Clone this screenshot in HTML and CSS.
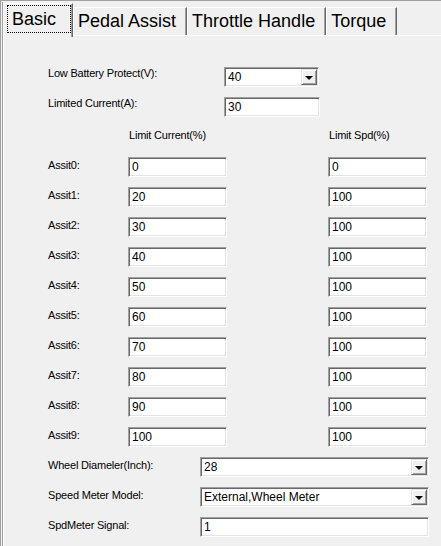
FILE: index.html
```html
<!DOCTYPE html>
<html lang="en">
<head>
    <meta charset="UTF-8">
    <meta name="viewport" content="width=device-width, initial-scale=1.0">
    <title>Basic</title>
    <link rel="stylesheet" href="styles.css">
</head>
<body>
    <div class="window">
        <div class="tabctl">
            <div class="tabs">
                <div class="tab tab-active"><span class="tab-focus">Basic</span></div>
                <div class="tab">Pedal Assist</div>
                <div class="tab">Throttle Handle</div>
                <div class="tab">Torque</div>
            </div>

            <div class="panel">
                <div class="form">
                    <div class="row row-top">
                        <span class="lbl lbl-top">Low Battery Protect(V):</span>
                        <div class="field combo combo-short">
                            <span class="field-val">40</span>
                            <span class="combo-btn"><span class="arrow"></span></span>
                        </div>
                    </div>
                    <div class="row row-top">
                        <span class="lbl lbl-top">Limited Current(A):</span>
                        <div class="field field-top"><span class="field-val">30</span></div>
                    </div>

                    <div class="row">
                        <span class="lbl lbl-assist"></span>
                        <span class="lbl col-head">Limit Current(%)</span>
                        <span class="lbl col-head">Limit Spd(%)</span>
                    </div>

                    <div id="assistRows"></div>

                    <div class="row">
                        <span class="lbl lbl-bottom">Wheel Diameler(Inch):</span>
                        <div class="field combo combo-long">
                            <span class="field-val">28</span>
                            <span class="combo-btn"><span class="arrow"></span></span>
                        </div>
                    </div>
                    <div class="row">
                        <span class="lbl lbl-bottom">Speed Meter Model:</span>
                        <div class="field combo combo-long">
                            <span class="field-val">External,Wheel Meter</span>
                            <span class="combo-btn"><span class="arrow"></span></span>
                        </div>
                    </div>
                    <div class="row">
                        <span class="lbl lbl-bottom">SpdMeter Signal:</span>
                        <div class="field combo-long"><span class="field-val">1</span></div>
                    </div>
                </div>
            </div>
        </div>
    </div>

    <script>
        // Assit0 ~ Assit9 : 전류 제한 / 속도 제한
        const assistValues = [
            [0, 0], [20, 100], [30, 100], [40, 100], [50, 100],
            [60, 100], [70, 100], [80, 100], [90, 100], [100, 100]
        ];
        const assistRows = document.getElementById('assistRows');

        assistValues.forEach((vals, i) => {
            const row = document.createElement('div');
            row.className = 'row';

            const label = document.createElement('span');
            label.className = 'lbl lbl-assist';
            label.textContent = `Assit${i}:`;
            row.appendChild(label);

            vals.forEach(v => {
                const field = document.createElement('div');
                field.className = 'field field-assist';
                const val = document.createElement('span');
                val.className = 'field-val';
                val.textContent = v;
                field.appendChild(val);
                row.appendChild(field);
            });
            assistRows.appendChild(row);
        });
    </script>
</body>
</html>
```

FILE: styles.css
```css
:root {
    --face: #f0f0f0;
    --shadow: #a0a0a0;
    --dark-shadow: #696969;
    --light: #e3e3e3;
    --hilight: #ffffff;
}

html, body {
    margin: 0;
    padding: 0;
    height: 100%;
    overflow: hidden;
}

body {
    background-color: var(--face);
    color: #000;
    font-family: 'Liberation Sans', Arial, sans-serif;
}

.window {
    display: flex;
    height: 100%;
    box-sizing: border-box;
    border-top: 1px solid var(--shadow);
    border-left: 1px solid var(--shadow);
    padding: 1px 0 0 1px;
}

.tabctl {
    flex: 1;
    display: flex;
    flex-direction: column;
    min-width: 0;
    border-left: 1px solid var(--shadow);
}

/* 탭 */
.tabs {
    display: flex;
    align-items: flex-end;
    height: 32px;
    padding-top: 1px;
}

.tab {
    height: 28px;
    box-sizing: border-box;
    padding: 0 10px 0 4px;
    border-top: 1px solid var(--hilight);
    border-left: 1px solid var(--hilight);
    border-right: 1px solid var(--dark-shadow);
    box-shadow: inset -1px 0 var(--shadow);
    font-size: 18px;
    line-height: 26px;
    white-space: nowrap;
}

.tab-active {
    position: relative;
    z-index: 1;
    height: 34px;
    margin-bottom: -2px;
    padding: 1px 1px 0 3px;
    background-color: var(--face);
}

.tab-focus {
    display: block;
    height: 28px;
    box-sizing: border-box;
    padding: 0 14px 0 4px;
    border: 1px dotted #000;
}

.panel {
    flex: 1;
    min-height: 0;
    overflow: hidden;
    border-top: 1px solid var(--hilight);
    border-left: 1px solid var(--hilight);
}

/* 폼 */
.form {
    display: flex;
    flex-direction: column;
    gap: 10px;
    padding: 31px 0 0 44px;
}

#assistRows {
    display: flex;
    flex-direction: column;
    gap: 10px;
}

.row {
    display: flex;
    align-items: flex-start;
    height: 20px;
}

.row > * {
    flex-shrink: 0;
}

.lbl {
    font-size: 11px;
    letter-spacing: -0.2px;
    line-height: 13px;
    padding-top: 2px;
    white-space: nowrap;
}

.lbl-top {
    width: 176px;
    padding-top: 0;
}

.lbl-assist { width: 80px; }
.lbl-bottom { width: 152px; }

.col-head {
    width: 199px;
    padding-left: 1px;
}

.field {
    display: flex;
    align-items: center;
    height: 20px;
    box-sizing: border-box;
    background-color: #fff;
    border: 1px solid;
    border-color: var(--shadow) var(--hilight) var(--hilight) var(--shadow);
    box-shadow: inset 1px 1px var(--dark-shadow), inset -1px -1px var(--light);
    padding: 1px 2px 1px 2px;
}

.field-val {
    flex: 1;
    font-size: 12px;
    line-height: 14px;
    padding-left: 1px;
    white-space: nowrap;
}

.field-top { width: 96px; }
.combo-short { width: 95px; }
.combo-long { width: 229px; }

.field-assist { width: 99px; }
.field-assist + .field-assist { margin-left: 101px; }

.combo { padding-right: 1px; }

.combo-btn {
    display: flex;
    align-items: center;
    justify-content: center;
    width: 16px;
    height: 16px;
    box-sizing: border-box;
    background-color: var(--face);
    border: 1px solid;
    border-color: var(--light) var(--dark-shadow) var(--dark-shadow) var(--light);
    box-shadow: inset 1px 1px var(--hilight), inset -1px -1px var(--shadow);
}

.arrow {
    width: 0;
    height: 0;
    border-left: 4px solid transparent;
    border-right: 4px solid transparent;
    border-top: 4px solid #000;
    margin-top: 1px;
}
```
